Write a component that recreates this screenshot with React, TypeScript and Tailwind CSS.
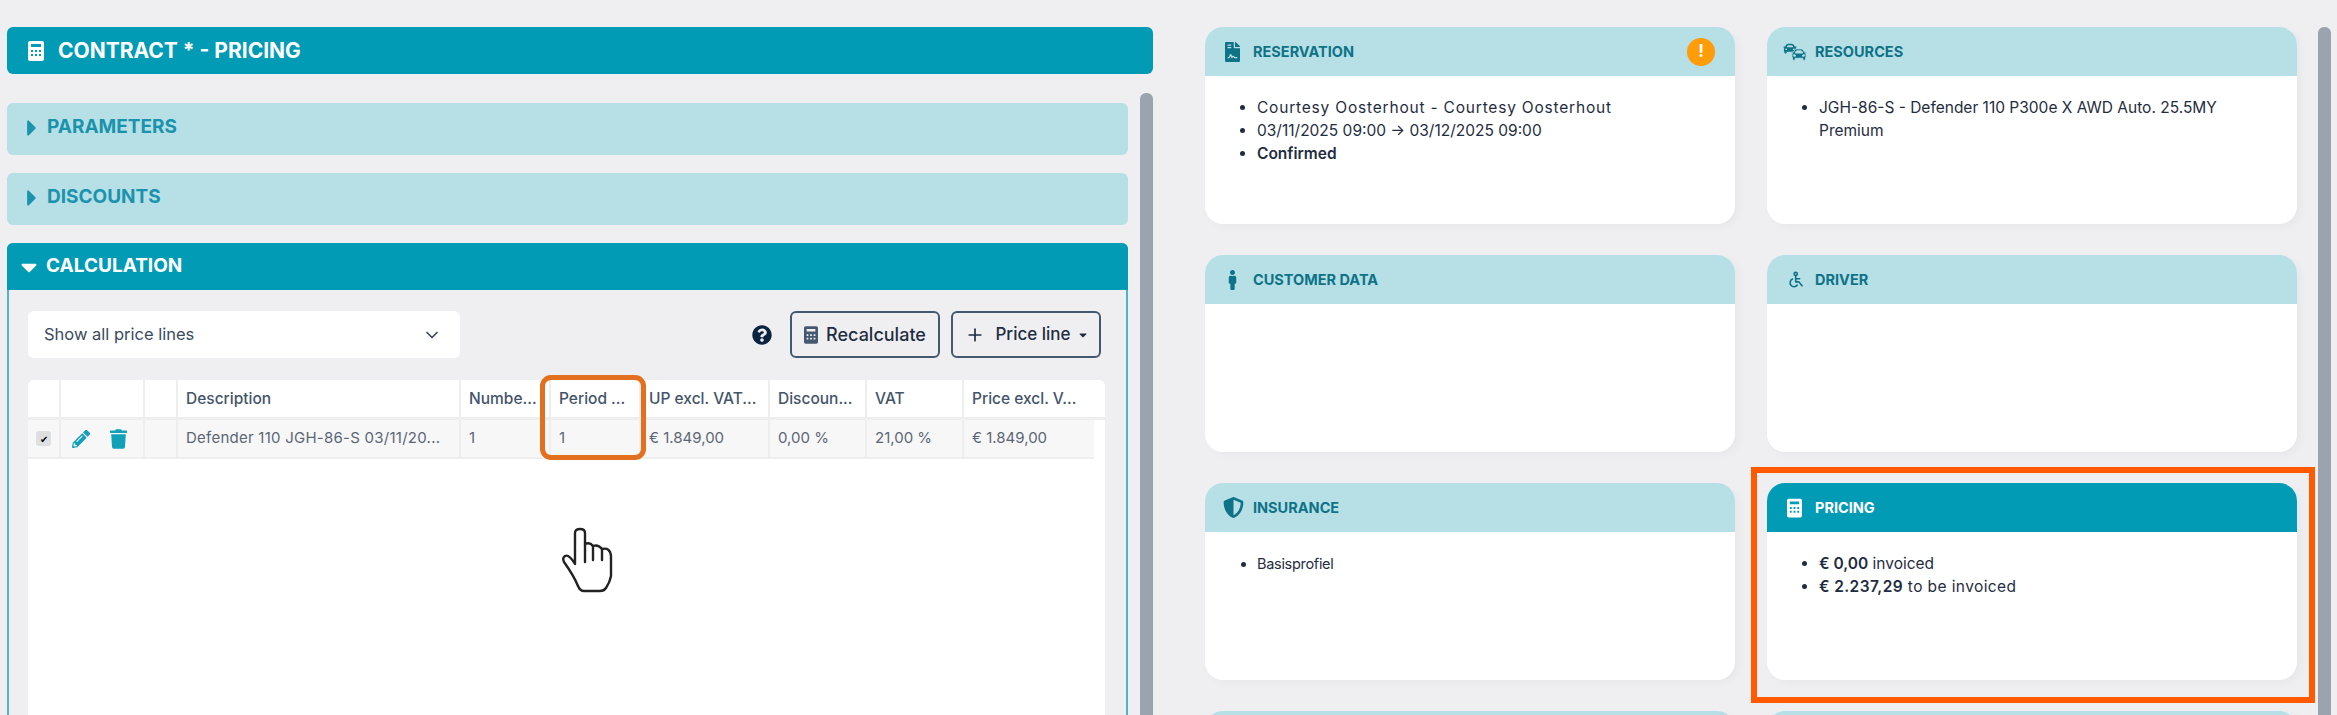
import React from 'react';
import { FaCar, FaCaretDown, FaCaretRight, FaFileContract, FaMale, FaPencilAlt, FaQuestionCircle, FaShieldAlt, FaTrash } from 'react-icons/fa';
import { TbDisabled } from 'react-icons/tb';
import { ChevronDown, Plus } from 'lucide-react';

const CalcIcon = ({ className }: { className: string }) => (
  <svg viewBox="0 0 16 20" className={className} fill="currentColor">
    <path
      fillRule="evenodd"
      d="M2 0h12a2 2 0 0 1 2 2v16a2 2 0 0 1-2 2H2a2 2 0 0 1-2-2V2a2 2 0 0 1 2-2z M3 3v3h10V3z M3 9v2h2V9z M7 9v2h2V9z M11 9v2h2V9z M3 13v2h2v-2z M7 13v2h2v-2z M11 13v2h2v-2z"
    />
  </svg>
);

const HandCursor = ({ className }: { className: string }) => (
  <svg viewBox="0 0 75 80" className={className} fill="none" stroke="#222222" strokeWidth="2.4" strokeLinejoin="round" strokeLinecap="round">
    <path d="M25 44 L25 13 Q25 9 30 9 Q35 9 35 13 L35 24 Q40 22 43 26 Q48 24 52 29 Q60 27 61 36 L61 56 Q60 62 56 68 Q54 71 50 71 L34 71 Q30 71 28 66 Q24 56 14 42 Q12 38 15 36 Q19 34 25 44 Z" fill="#ffffff" />
    <path d="M35 24 V42 M43 26 V40 M52 29 V40" />
  </svg>
);

const Section = ({ title }: { title: string }) => (
  <div className="mb-[18px] flex h-[52px] items-center rounded-[6px] bg-[#b6dfe6] pb-[3px] pl-[18px] text-[19px] font-bold text-[#1a93ad]">
    <FaCaretRight className="mr-[8px] h-[26px] w-[14px]" />
    {title}
  </div>
);

const Card = ({ title, icon, alert, active, children }: { title: string; icon?: React.ReactNode; alert?: boolean; active?: boolean; children?: React.ReactNode }) => (
  <div className="h-[197px] overflow-hidden rounded-[18px] bg-white shadow-[4px_3px_8px_rgba(0,0,0,0.03)]">
    <div className={`flex h-[49px] items-center pl-[20px] pr-[20px] text-[14.5px] font-bold ${active ? 'bg-[#019bb6] text-white' : 'bg-[#b6dfe6] text-[#0e7386]'}`}>
      <span className="flex w-[28px] justify-start">{icon}</span>
      {title}
      {alert && (
        <span className="ml-auto flex h-[28px] w-[28px] items-center justify-center rounded-full bg-[#ff9c0a] text-[17px] font-bold leading-none text-white">!</span>
      )}
    </div>
    <ul className="list-disc pl-[52px] pr-[20px] pt-[20px] text-[15.5px] leading-[23px] text-[#1f2d42]">{children}</ul>
  </div>
);

const Cards = () => (
  <div className="grid grid-cols-[530px_530px] auto-rows-[197px] gap-x-[32px] gap-y-[31px]">
    <Card title="RESERVATION" icon={<FaFileContract className="h-[20px] w-[15px]" />} alert>
      <li className="tracking-[0.8px]">Courtesy Oosterhout - Courtesy Oosterhout</li>
      <li>03/11/2025 09:00 → 03/12/2025 09:00</li>
      <li className="font-semibold">Confirmed</li>
    </Card>
    <Card
      title="RESOURCES"
      icon={
        <span className="relative -ml-[4px] block h-[20px] w-[24px]">
          <FaCar className="absolute left-0 top-0 h-[13px] w-[14px]" />
          <FaCar className="absolute bottom-0 right-0 h-[15px] w-[16px] stroke-[#b6dfe6] stroke-[30px]" />
        </span>
      }
    >
      <li>JGH-86-S - Defender 110 P300e X AWD Auto. 25.5MY Premium</li>
    </Card>
    <Card title="CUSTOMER DATA" icon={<FaMale className="h-[20px] w-[15px]" />} />
    <Card title="DRIVER" icon={<TbDisabled className="h-[21px] w-[19px]" />} />
    <Card title="INSURANCE" icon={<FaShieldAlt className="-ml-[2px] h-[21px] w-[21px]" />}>
      <li className="text-[14.5px] tracking-[-0.3px]">Basisprofiel</li>
    </Card>
    <div className="relative">
      <Card title="PRICING" active icon={<CalcIcon className="h-[20px] w-[15px]" />}>
        <li><span className="font-semibold">€ 0,00</span> invoiced</li>
        <li className="tracking-[0.4px]"><span className="font-semibold">€ 2.237,29</span> to be invoiced</li>
      </Card>
      {/* annotation frame */}
      <div className="absolute -left-[16px] -top-[16px] h-[236px] w-[564px] border-[6px] border-[#ff5a00]" />
    </div>
    <Card title="" />
    <Card title="" />
  </div>
);

const Cell = ({ className, children }: { className: string; children?: React.ReactNode }) => (
  <div className={`flex items-center whitespace-nowrap border-r-2 border-[#eeeeef] pl-[8px] ${className}`}>{children}</div>
);

const PriceTable = () => (
  <div className="relative h-[335px] rounded-t-[6px] bg-white text-[15px]">
    <div className="flex h-[40px] border-b-[3px] border-[#eeeeef] text-[15.5px] font-medium text-[#44546a]">
      <Cell className="w-[33px]" />
      <Cell className="w-[84px]" />
      <Cell className="w-[33px]" />
      <Cell className="w-[283px]">Description</Cell>
      <Cell className="w-[90px]">Numbe...</Cell>
      <Cell className="w-[90px]">Period ...</Cell>
      <Cell className="w-[129px]">UP excl. VAT...</Cell>
      <Cell className="w-[97px]">Discoun...</Cell>
      <Cell className="w-[97px]">VAT</Cell>
      <div className="flex items-center pl-[8px]">Price excl. V...</div>
    </div>
    <div className="flex h-[39px] w-[1066px] border-b-2 border-[#eeeeef] bg-[#f7f7f8] text-[#5b6675]">
      <Cell className="w-[33px]">
        <span className="flex h-[15px] w-[15px] items-center justify-center rounded-[3px] bg-[#dedfe1] text-[10px] leading-none text-black">✔</span>
      </Cell>
      <Cell className="w-[84px] !pl-[11px] text-[#12a0b8]">
        <FaPencilAlt className="h-[18px] w-[18px]" />
        <FaTrash className="ml-[20px] h-[20px] w-[17px]" />
      </Cell>
      <Cell className="w-[33px]" />
      <Cell className="w-[283px] tracking-[0.25px]">Defender 110 JGH-86-S 03/11/20...</Cell>
      <Cell className="w-[90px]">1</Cell>
      <Cell className="w-[90px]">1</Cell>
      <Cell className="w-[129px]">€ 1.849,00</Cell>
      <Cell className="w-[97px]">0,00 %</Cell>
      <Cell className="w-[97px]">21,00 %</Cell>
      <div className="flex items-center pl-[8px]">€ 1.849,00</div>
    </div>
    {/* annotation around period column */}
    <div className="absolute -top-[5px] left-[512px] h-[85px] w-[106px] rounded-[11px] border-[5px] border-[#e2701f]" />
    <HandCursor className="absolute left-[522px] top-[140px] h-[80px] w-[75px]" />
  </div>
);

export default function App() {
  return (
    <div className="flex h-[715px] w-[2337px] overflow-hidden bg-[#efeff1] font-['Inter',sans-serif]">
      <div className="ml-[7px] w-[1146px] pt-[27px]">
        <div className="flex h-[47px] items-center rounded-[6px] bg-[#019bb6] pl-[21px] text-[21px] font-bold text-white">
          <CalcIcon className="mr-[14px] h-[20px] w-[16px]" />
          CONTRACT * - PRICING
        </div>
        <div className="mt-[29px] flex">
          <div className="w-[1121px]">
            <Section title="PARAMETERS" />
            <Section title="DISCOUNTS" />
            <div className="rounded-t-[6px] border-x-2 border-[#4fb5c6]">
              <div className="-mx-[2px] flex h-[47px] items-center rounded-t-[6px] bg-[#019bb6] pl-[13px] text-[19px] font-bold text-white">
                <FaCaretDown className="mr-[8px] h-[26px] w-[18px]" />
                CALCULATION
              </div>
              <div className="pl-[19px] pr-[21px] pt-[21px]">
                <div className="flex items-center">
                  <div className="flex h-[47px] w-[432px] items-center justify-between rounded-[6px] bg-white pl-[16px] pr-[18px] text-[16.5px] text-[#3a4a60]">
                    Show all price lines
                    <ChevronDown className="h-[20px] w-[20px]" />
                  </div>
                  <FaQuestionCircle className="ml-auto mr-[18px] h-[20px] w-[20px] text-[#0b2440]" />
                  <button className="flex h-[47px] w-[150px] items-center justify-center gap-[8px] rounded-[6px] border-2 border-[#44586f] text-[18px] font-medium text-[#1f2d42]">
                    <CalcIcon className="h-[20px] w-[14px] text-[#44586f]" />
                    Recalculate
                  </button>
                  <button className="ml-[11px] mr-[4px] flex h-[47px] w-[150px] items-center justify-center rounded-[6px] border-2 border-[#44586f] text-[17px] font-medium text-[#1f2d42]">
                    <Plus className="mr-[10px] h-[20px] w-[20px]" />
                    Price line
                    <FaCaretDown className="ml-[8px] h-[12px] w-[8px]" />
                  </button>
                </div>
                <div className="mt-[22px]">
                  <PriceTable />
                </div>
              </div>
            </div>
          </div>
          <div className="-mt-[10px] ml-[12px] h-[640px] w-[13px] rounded-t-[6px] bg-[#9aa3ae]" />
        </div>
      </div>
      <div className="ml-[52px] pt-[27px]">
        <Cards />
      </div>
      <div className="ml-[21px] mt-[27px] h-[700px] w-[13px] rounded-t-[6px] bg-[#9aa3ae]" />
    </div>
  );
}
